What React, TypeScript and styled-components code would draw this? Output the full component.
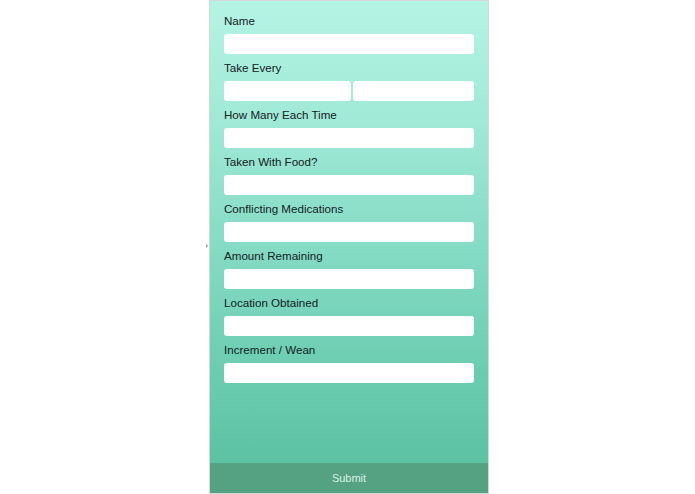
import React from 'react'
import styled, { createGlobalStyle } from 'styled-components'

const GlobalStyle = createGlobalStyle`
  html, body {
    margin: 0;
    padding: 0;
    background: #ffffff;
  }
  body {
    font-family: 'Liberation Sans', Arial, sans-serif;
  }
`

const Page = styled.div`
  position: relative;
  width: 695px;
  height: 494px;
  overflow: hidden;
`

const Handle = styled.div`
  position: absolute;
  left: 206px;
  top: 244px;
  width: 0;
  height: 0;
  border-top: 2px solid transparent;
  border-bottom: 2px solid transparent;
  border-left: 2px solid #9a9a9a;
`

const Phone = styled.div`
  margin-left: 209px;
  width: 278px;
  height: 492px;
  box-sizing: content-box;
  border: 1px solid #d4d8d6;
  display: flex;
  flex-direction: column;
  background: linear-gradient(
    180deg,
    #b5f4e4 0%,
    #9fe9d6 25%,
    #85dbc4 50%,
    #6bcdb0 75%,
    #57be9d 100%
  );
`

const Form = styled.form`
  flex: 1;
  display: flex;
  flex-direction: column;
  gap: 6px;
  padding: 12px 14px 0;
`

const Field = styled.div`
  display: flex;
  flex-direction: column;
`

const Label = styled.label`
  font-size: 11.6px;
  line-height: 15px;
  color: #14211d;
  margin-bottom: 6px;
`

const Input = styled.input`
  box-sizing: border-box;
  width: 100%;
  height: 20px;
  border: none;
  border-radius: 3px;
  background: #ffffff;
  padding: 0 6px;
  font-family: inherit;
  font-size: 11px;
  outline: none;
`

const SplitRow = styled.div`
  display: grid;
  grid-template-columns: 127px 1fr;
  gap: 2px;
`

const SubmitBar = styled.button`
  height: 30px;
  border: none;
  background: #54a282;
  color: #dcefe7;
  font-family: inherit;
  font-size: 11px;
  padding: 0;
  cursor: pointer;
`

const fields = [
  'How Many Each Time',
  'Taken With Food?',
  'Conflicting Medications',
  'Amount Remaining',
  'Location Obtained',
  'Increment / Wean'
]

export default function App() {
  return (
    <Page>
      <GlobalStyle />
      <Handle />
      <Phone>
        <Form onSubmit={e => e.preventDefault()}>
          <Field>
            <Label>Name</Label>
            <Input type='text' />
          </Field>
          <Field>
            <Label>Take Every</Label>
            <SplitRow>
              <Input type='text' />
              <Input type='text' />
            </SplitRow>
          </Field>
          {fields.map(name => (
            <Field key={name}>
              <Label>{name}</Label>
              <Input type='text' />
            </Field>
          ))}
        </Form>
        <SubmitBar type='button'>Submit</SubmitBar>
      </Phone>
    </Page>
  )
}
